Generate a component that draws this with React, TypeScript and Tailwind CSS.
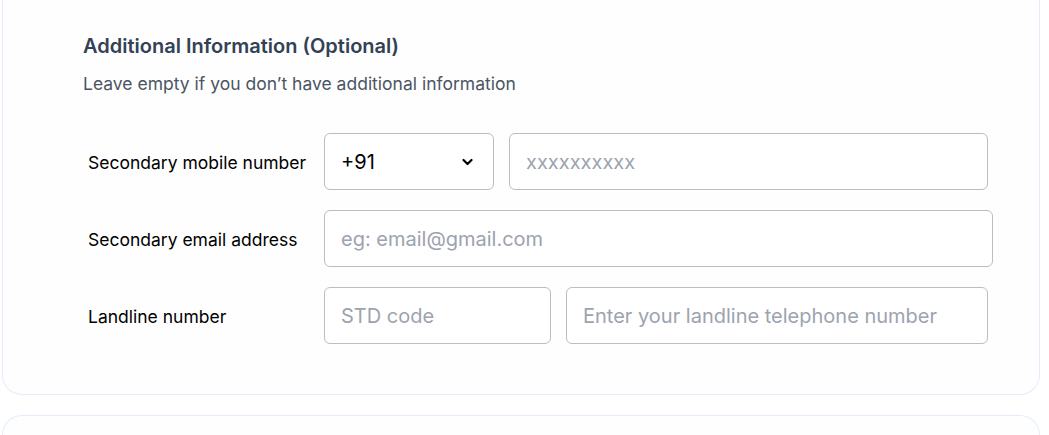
import React from "react";

const inputBase =
  "h-[57px] rounded-[6px] border border-[#bdbdbd] bg-white px-4 text-[20px] text-black placeholder:text-[#9ca3af] outline-none";

function Row({ label, children }: { label: string; children: React.ReactNode }) {
  return (
    <div className="flex items-center">
      <div className="w-[241px] shrink-0 pl-[5px] pt-1 text-[17.5px] text-black">{label}</div>
      {children}
    </div>
  );
}

export default function App() {
  return (
    <div
      className="min-h-[435px] bg-white px-[2px]"
      style={{ fontFamily: "Inter, 'Noto Sans', sans-serif" }}
    >
      <div className="w-[1038px] rounded-b-[20px] border-x border-b border-[#e3edf9] bg-[#fefefe] pb-[50px] pl-[80px] pt-[32px]">
        <h2 className="text-[20px] font-semibold leading-[28px] text-[#334155]">
          Additional Information (Optional)
        </h2>
        <p className="mt-[12px] text-[17.5px] leading-[24px] text-[#4b5563]">
          Leave empty if you don’t have additional information
        </p>

        <div className="mt-[37px] flex flex-col gap-[20px]">
          <Row label="Secondary mobile number">
            <div className="relative w-[170px]">
              <select className={`${inputBase} w-full appearance-none`} defaultValue="+91">
                <option>+91</option>
              </select>
              <svg
                className="pointer-events-none absolute right-[21px] top-1/2 -translate-y-1/2"
                width="11"
                height="8"
                viewBox="0 0 11 8"
                fill="none"
              >
                <path d="M1.5 2 L5.5 6 L9.5 2" stroke="#000" strokeWidth="2.2" strokeLinecap="round" strokeLinejoin="round" />
              </svg>
            </div>
            <input className={`${inputBase} ml-[15px] w-[479px]`} placeholder="xxxxxxxxxx" />
          </Row>

          <Row label="Secondary email address">
            <input className={`${inputBase} w-[669px]`} placeholder="eg: email@gmail.com" />
          </Row>

          <Row label="Landline number">
            <input className={`${inputBase} w-[227px]`} placeholder="STD code" />
            <input
              className={`${inputBase} ml-[15px] w-[422px]`}
              placeholder="Enter your landline telephone number"
            />
          </Row>
        </div>
      </div>

      <div className="mt-[20px] h-[40px] w-[1038px] rounded-t-[20px] border-x border-t border-[#e3edf9] bg-[#fefefe]" />
    </div>
  );
}
